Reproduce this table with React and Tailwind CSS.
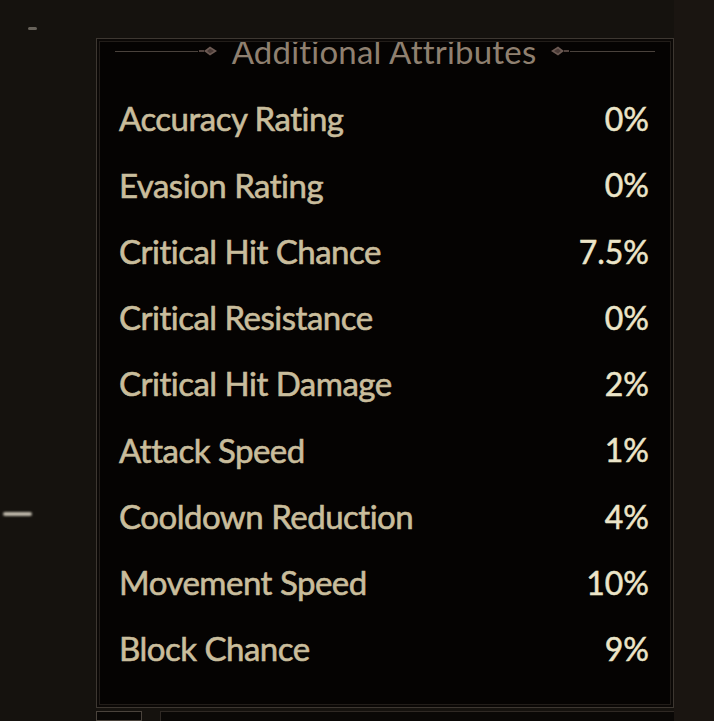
const stats = [
  ['Accuracy Rating', '0%'],
  ['Evasion Rating', '0%'],
  ['Critical Hit Chance', '7.5%'],
  ['Critical Resistance', '0%'],
  ['Critical Hit Damage', '2%'],
  ['Attack Speed', '1%'],
  ['Cooldown Reduction', '4%'],
  ['Movement Speed', '10%'],
  ['Block Chance', '9%']
]

function Ornament({ flip }) {
  return (
    <svg width="20" height="12" viewBox="0 0 20 12" className={flip ? 'rotate-180' : ''}>
      <path d="M1 6 L8 1.5 L14 6 L8 10.5 Z" fill="#6e5b54" />
      <path d="M4 6 L8 3.5 L11 6 L8 8.5 Z" fill="#4a3a36" />
      <path d="M14 6 L19 6" stroke="#6e5b54" strokeWidth="1.5" />
    </svg>
  )
}

export default function App() {
  return (
    <div
      className="w-[714px] h-[721px] overflow-hidden bg-[#15120e] relative"
      style={{ fontFamily: 'Lato, "Open Sans", sans-serif' }}
    >
      {/* stray highlights */}
      <div className="absolute left-[28px] top-[27px] w-[9px] h-[3px] rounded-full bg-[#8a847a] opacity-70" />
      <div className="absolute left-[3px] top-[512px] w-[29px] h-[4px] rounded-full bg-[#e8e2d2] opacity-80 blur-[1px]" />

      <div className="flex h-full">
        <div className="w-[96px] shrink-0" />
        <div className="w-[578px] shrink-0 flex flex-col">
          <div className="mt-[38px] h-[672px] border border-[#3d3731] p-[2px] bg-[#0b0806]">
            <div className="h-full border border-[#221d19] bg-[#050302] overflow-hidden flex flex-col pl-[19px] pr-[21px]">
              {/* header */}
              <div className="h-[53px] flex items-start -mt-[9px]">
                <div className="flex items-center w-full gap-[14px]">
                  <div className="flex-1 flex items-center">
                    <div className="flex-1 h-px bg-[#4a423c] ml-[-4px]" />
                    <Ornament flip />
                  </div>
                  <div className="text-[33px] leading-[36px] text-[#8f8070] tracking-[0.2px]">
                    Additional Attributes
                  </div>
                  <div className="flex-1 flex items-center">
                    <Ornament />
                    <div className="flex-1 h-px bg-[#4a423c] mr-[-6px]" />
                  </div>
                </div>
              </div>
              {/* rows */}
              <div className="flex flex-col">
                {stats.map(([label, value]) => (
                  <div key={label} className="h-[66.25px] flex items-center justify-between">
                    <span className="text-[33px] text-[#c9bd9c] tracking-[-0.5px] [-webkit-text-stroke:0.6px_currentColor]">
                      {label}
                    </span>
                    <span className="text-[32px] text-[#ece5c9] [-webkit-text-stroke:0.5px_currentColor]">
                      {value}
                    </span>
                  </div>
                ))}
              </div>
            </div>
          </div>
          {/* bottom strip */}
          <div className="flex gap-[18px] mt-[3px]">
            <div className="w-[46px] h-[10px] border border-[#4a433c] bg-[#0a0806]" />
            <div className="flex-1 h-[10px] border-t border-l border-[#2f2924] bg-[#0a0806]" />
          </div>
        </div>
        <div className="flex-1 bg-[#1a1511]" />
      </div>
    </div>
  )
}
